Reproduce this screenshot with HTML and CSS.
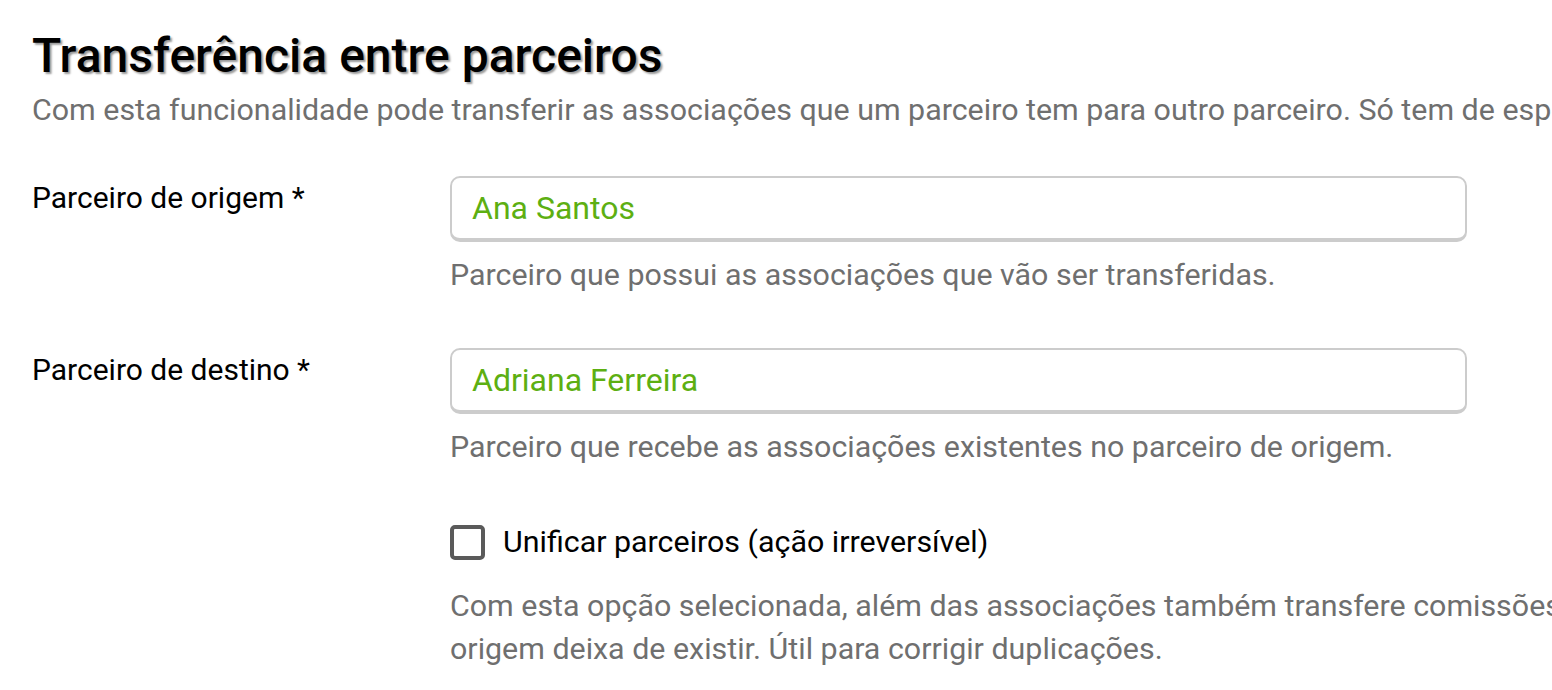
FILE: index.html
```html
<!DOCTYPE html>
<html lang="pt">
<head>
<meta charset="utf-8">
<title>Transferência entre parceiros</title>
<link rel="stylesheet" href="styles.css">
</head>
<body>
<main class="page">
  <h1 class="title">Transferência entre parceiros</h1>
  <p class="intro">Com esta funcionalidade pode transferir as associações que um parceiro tem para outro parceiro. Só tem de especificar o parceiro de origem e o parceiro de destino.</p>

  <div class="form">
    <div class="row">
      <label class="label">Parceiro de origem *</label>
      <div class="field">
        <div class="input">Ana Santos</div>
        <p class="help">Parceiro que possui as associações que vão ser transferidas.</p>
      </div>
    </div>

    <div class="row">
      <label class="label">Parceiro de destino *</label>
      <div class="field">
        <div class="input">Adriana Ferreira</div>
        <p class="help">Parceiro que recebe as associações existentes no parceiro de origem.</p>
      </div>
    </div>

    <div class="row">
      <div class="label"></div>
      <div class="field">
        <label class="check">
          <span class="box"></span>
          <span class="check-text">Unificar parceiros (ação irreversível)</span>
        </label>
        <p class="help long">Com esta opção selecionada, além das associações também transfere comissões e o parceiro de<br>origem deixa de existir. Útil para corrigir duplicações.</p>
      </div>
    </div>
  </div>
</main>
</body>
</html>
```

FILE: styles.css
```css
html, body {
  margin: 0;
  padding: 0;
  background: #ffffff;
  overflow: hidden;
}

body {
  font-family: Roboto, "Liberation Sans", Arial, sans-serif;
  color: #000;
  width: 1552px;
  height: 690px;
}

.page {
  padding: 28px 0 0 32px;
  width: 2000px;
}

.title {
  margin: 0;
  font-size: 48px;
  font-weight: 500;
  line-height: 56px;
  color: #000;
  text-shadow: 2px 2px 2px rgba(0, 0, 0, 0.4);
}

.intro {
  margin: 6px 0 0;
  font-size: 30.4px;
  line-height: 40px;
  color: #6f6f6f;
  white-space: nowrap;
}

.form {
  margin-top: 46px;
  display: flex;
  flex-direction: column;
}

.row {
  display: flex;
}

.label {
  width: 418px;
  flex: none;
  font-size: 30px;
  line-height: 40px;
  padding-top: 2px;
  color: #000;
}

.field {
  flex: none;
  width: 1400px;
}

.input {
  box-sizing: border-box;
  width: 1017px;
  height: 66px;
  border: 2px solid #cccccc;
  border-bottom-width: 4px;
  border-radius: 10px;
  padding: 0 20px;
  display: flex;
  align-items: center;
  font-size: 32px;
  color: #5daf12;
}

.help {
  margin: 13px 0 53px;
  font-size: 30.4px;
  line-height: 40px;
  color: #6f6f6f;
}

.check {
  display: flex;
  align-items: center;
  gap: 18px;
  margin-top: 2px;
}

.box {
  box-sizing: border-box;
  width: 35px;
  height: 35px;
  border: 4px solid #5a5a5a;
  border-radius: 5px;
  flex: none;
}

.check-text {
  font-size: 30.4px;
  line-height: 40px;
  color: #000;
}

.help.long {
  margin-top: 22px;
  line-height: 43px;
  white-space: nowrap;
}
```
